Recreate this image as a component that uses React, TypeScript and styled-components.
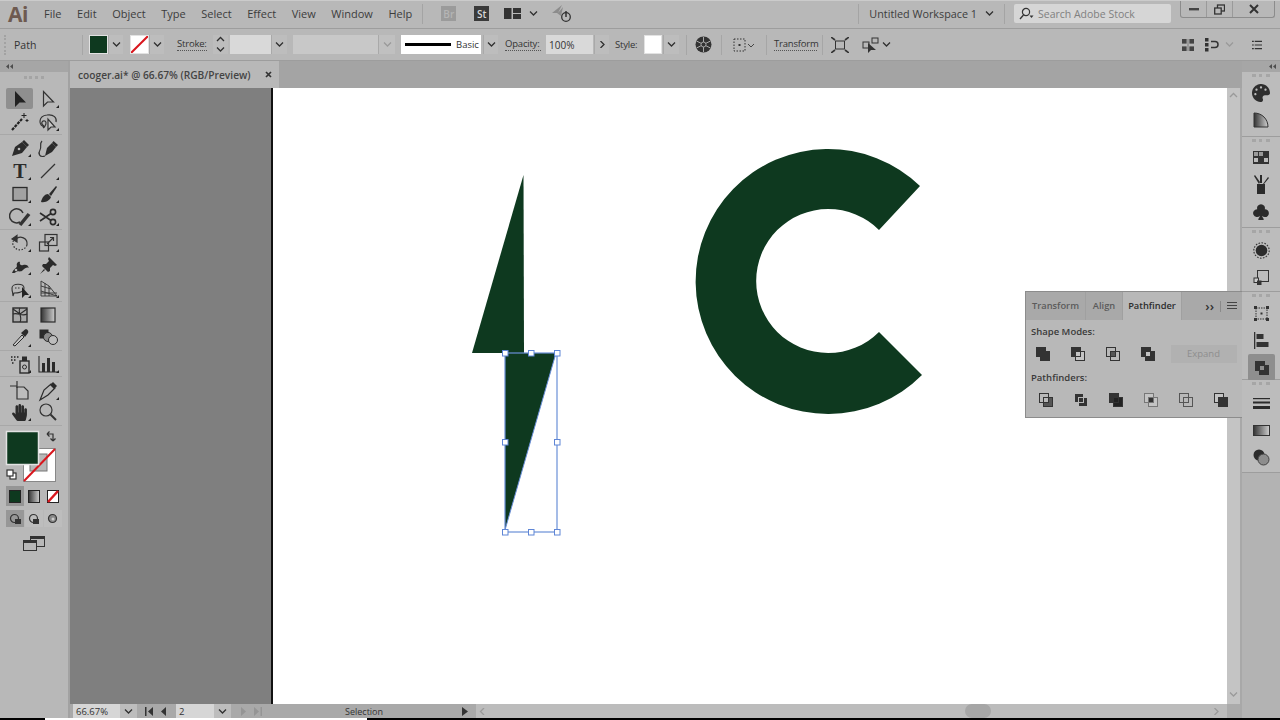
import { FC, ReactNode } from 'react';
import styled, { createGlobalStyle, css } from 'styled-components';
import { FaHandPaper, FaPalette } from 'react-icons/fa';
import { BsSuitClubFill } from 'react-icons/bs';

const GREEN = '#0e391f';
const INK = '#333333';

const GlobalStyle = createGlobalStyle`
  html, body {
    margin: 0;
    background: #b8b8b8;
    overflow: hidden;
  }
  * {
    box-sizing: border-box;
  }
`;

const offset = css<{ $ml?: number }>`
  margin-left: ${(p) => p.$ml ?? 0}px;
  flex-shrink: 0;
`;

/* ---------- small shared drawings ---------- */

const Chevron: FC<{ dim?: boolean; dir?: 'down' | 'up' | 'right' | 'left' }> = ({ dim, dir = 'down' }) => {
  const d = {
    down: 'M1 1.5 L4.5 5 L8 1.5',
    up: 'M1 5 L4.5 1.5 L8 5',
    right: 'M2.5 0 L6 3.5 L2.5 7',
    left: 'M6 0 L2.5 3.5 L6 7',
  }[dir];
  return (
    <svg width="9" height="7" viewBox="0 0 9 7">
      <path d={d} fill="none" stroke={dim ? '#9a9a9a' : '#303030'} strokeWidth="1.3" />
    </svg>
  );
};

const Collapse: FC = () => (
  <svg width="7" height="5" viewBox="0 0 7 5" fill="#4d4d4d">
    <path d="M3 0 L0 2.5 L3 5 Z M7 0 L4 2.5 L7 5 Z" />
  </svg>
);

const Pair: FC<{ back: string; front: string; mid: string; line?: string }> = ({ back, front, mid, line = '#333' }) => (
  <svg width="16" height="16" viewBox="0 0 16 16">
    <rect x="1.5" y="1.5" width="9" height="9" fill={back} stroke={line} />
    <rect x="5.5" y="5.5" width="9" height="9" fill={front} stroke={line} />
    <rect x="5.5" y="5.5" width="5" height="5" fill={mid} stroke={line} />
  </svg>
);

/* ---------- tool icons ---------- */

const toolIcons: Record<string, ReactNode> = {
  selection: <path d="M6 3 L6 19 L10.5 14.5 L17 14.5 Z" fill="#222" />,
  direct: <path d="M6.5 3.5 L6.5 18 L10.5 14 L16.5 14 Z" fill="none" stroke="#333" strokeWidth="1.2" />,
  wand: (
    <g stroke="#222" fill="none">
      <path d="M3 19 L13 8" strokeWidth="2.2" strokeDasharray="3 1" />
      <path d="M15 2 V7 M12.5 4.5 H17.5 M18 8 V11 M16.5 9.5 H19.5" strokeWidth="1" />
    </g>
  ),
  lasso: (
    <g fill="none" stroke="#333" strokeWidth="1.2">
      <path d="M8 16 C1 15 1 5 10 4 C17 3 20 7 19 11" />
      <path d="M7 15 C3 13 5 9 8 10 C10 11 9 15 6 17" />
      <path d="M11 8 L11 19 L14 16 L18 16 Z" fill="#c8c8c8" />
    </g>
  ),
  pen: (
    <g>
      <path d="M3 19 L6 10 L13 5 L18 10 L13 16 Z" fill="#2b2b2b" />
      <path d="M13 5 L15 3 L20 8 L18 10 Z" fill="#2b2b2b" />
      <circle cx="10" cy="12" r="1.3" fill="#b8b8b8" />
    </g>
  ),
  curvature: (
    <g>
      <path d="M8 19 L10 11 L15 6 L19 10 L15 15 Z" fill="#2b2b2b" />
      <path d="M15 6 L16.5 4 L21 8 L19 10 Z" fill="#2b2b2b" />
      <path d="M8 19 C2 21 1 16 3 13 C5 10 2 7 5 4" fill="none" stroke="#333" strokeWidth="1.2" />
    </g>
  ),
  type: (
    <text x="11" y="18" textAnchor="middle" fontFamily="'Liberation Serif', serif" fontWeight="700" fontSize="20" fill="#2b2b2b">
      T
    </text>
  ),
  line: <path d="M4 18 L18 4" stroke="#333" strokeWidth="1.2" />,
  rect: <rect x="4" y="4.5" width="14" height="13" fill="#a2a2a2" stroke="#2b2b2b" strokeWidth="1.3" />,
  brush: (
    <g fill="#2b2b2b">
      <path d="M12 11 L19 3 L20 4 L14 13 Z" />
      <path d="M4 19 C5 14 8 11 11 11 L14 14 C13 17 9 20 4 19 Z" />
    </g>
  ),
  shaper: (
    <g fill="none" stroke="#333">
      <path d="M11 16 A7 7 0 1 1 14 7" strokeWidth="1.5" />
      <path d="M11 19 L20 8" strokeWidth="3.5" />
    </g>
  ),
  scissors: (
    <g fill="none" stroke="#2b2b2b" strokeWidth="1.6">
      <circle cx="16" cy="6" r="2.6" />
      <circle cx="16" cy="16" r="2.6" />
      <path d="M14 7.5 L3 15 M14 14.5 L3 7" />
    </g>
  ),
  rotate: (
    <g fill="none" stroke="#333" strokeWidth="1.2">
      <path d="M7 7 C11 3 19 6 18 13" />
      <path d="M18 13 C16 19 7 20 4 13 C3.5 11 4 9 5 8" strokeDasharray="1.5 1.5" />
      <path d="M3 7 L8 3.5 L8 10 Z" fill="#333" />
    </g>
  ),
  scale: (
    <g fill="none" stroke="#333" strokeWidth="1.2">
      <rect x="8" y="2.5" width="12" height="11" />
      <rect x="2.5" y="10" width="9" height="9" />
      <path d="M10 12 L16 6 M13 5.5 H16.5 V9" />
    </g>
  ),
  warp: (
    <g fill="#2b2b2b">
      <path d="M3 18 C5 13 7 14 8 11 C7 9 9 6 11 7 C10 9 12 11 14 10 C17 9 19 10 20 13 C18 12 16 13 14 15 C11 18 9 15 7 17 C6 18 5 18 3 18 Z" />
      <circle cx="7" cy="15" r="1.3" fill="#b8b8b8" />
    </g>
  ),
  pin: (
    <g fill="#2b2b2b">
      <path d="M12 2 L20 10 L18 11 L16 10 L13 13 L13 16 L11 17 L5 11 L6 9 L9 9 L12 6 L11 4 Z" />
      <path d="M7 14 L3 19 L8 15 Z" />
    </g>
  ),
  free: (
    <g>
      <path d="M3 10 C3 5 15 5 15 10 C15 15 7 15 5 15 L4 18 L3.5 14 C3 13 3 12 3 10 Z" fill="none" stroke="#333" strokeWidth="1.1" />
      <path d="M6 10 H12" stroke="#333" strokeDasharray="1.5 1.5" />
      <path d="M13 9 L13 20 L16 17 L20 17 Z" fill="#222" />
    </g>
  ),
  perspective: (
    <g fill="none" stroke="#333" strokeWidth="0.9">
      <path d="M4 3 L4 18 L20 18 L12 8 Z" />
      <path d="M4 8 L14 11 M4 13 L20 18 M8 5 L8 18 M12 8 L12 18 M4 15 H20" />
    </g>
  ),
  mesh: (
    <g fill="none" stroke="#2b2b2b" strokeWidth="1.1">
      <rect x="4" y="4" width="14" height="14" fill="#a9a9a9" strokeWidth="1.4" />
      <path d="M11 4 C8 8 14 13 11 18 M4 10 C9 8 13 13 18 10 M4 5 L11 10 M18 5 L11 10" />
    </g>
  ),
  gradient: <rect x="4" y="4" width="14" height="14" fill="url(#toolFade)" stroke="#2b2b2b" strokeWidth="1.2" />,
  eyedropper: (
    <g>
      <path d="M4 18 L13 8 L15 10 L6 19 Z" fill="#c5c5c5" stroke="#2b2b2b" />
      <path d="M12 6 L16 2.5 C18 1.5 20 4 19 6 L16 10 Z" fill="#2b2b2b" />
    </g>
  ),
  blend: (
    <g stroke="#2b2b2b">
      <rect x="3" y="3" width="8" height="8" fill="#2b2b2b" />
      <circle cx="11" cy="10" r="4.5" fill="#8a8a8a" />
      <circle cx="16" cy="13" r="4.5" fill="#bcbcbc" />
    </g>
  ),
  sprayer: (
    <g>
      <path d="M2 4 H3.5 M5 4 H6.5 M8 4 H9.5 M2 7 H3.5 M5 7 H6.5 M3 10 H4.5" stroke="#222" strokeWidth="1.4" />
      <rect x="11" y="8" width="9" height="12" fill="none" stroke="#2b2b2b" strokeWidth="1.4" />
      <rect x="13" y="3.5" width="5" height="4.5" fill="#2b2b2b" />
      <circle cx="15.5" cy="14" r="2" fill="none" stroke="#2b2b2b" />
    </g>
  ),
  graph: (
    <g fill="#2b2b2b">
      <path d="M2 3 V19 H21" fill="none" stroke="#2b2b2b" strokeWidth="1.1" />
      <rect x="5" y="10" width="3" height="9" />
      <rect x="10" y="5" width="3" height="14" />
      <rect x="15" y="9" width="3" height="10" />
    </g>
  ),
  artboard: (
    <g fill="none" stroke="#333" strokeWidth="1.2">
      <path d="M8 7 H15 L19 11 V19 H8 Z" fill="#bdbdbd" />
      <path d="M1 6 H8 M8 1 V8" />
    </g>
  ),
  slice: (
    <g>
      <path d="M3 20 L7 10 L14 4 L18 8 L11 15 Z" fill="none" stroke="#2b2b2b" strokeWidth="1.2" />
      <path d="M13 5 L16 2 L20 6 L17 9 Z" fill="#2b2b2b" />
    </g>
  ),
  zoom: (
    <g fill="none" stroke="#333">
      <circle cx="9" cy="9" r="6" strokeWidth="1.2" />
      <path d="M13.5 13.5 L19 19" strokeWidth="2" />
    </g>
  ),
};

const toolSections: { top?: number; row?: number; bottom?: number; tools: [string, boolean][] }[] = [
  { tools: [['selection', false], ['direct', true], ['wand', false], ['lasso', true]] },
  {
    tools: [
      ['pen', true], ['curvature', false], ['type', true], ['line', true],
      ['rect', true], ['brush', true], ['shaper', true], ['scissors', true],
    ],
  },
  { tools: [['rotate', true], ['scale', true], ['warp', true], ['pin', true], ['free', true], ['perspective', true]] },
  { tools: [['mesh', false], ['gradient', false], ['eyedropper', true], ['blend', false]] },
  { tools: [['sprayer', true], ['graph', true]] },
  { top: 3, row: 21.5, bottom: 2, tools: [['artboard', false], ['slice', true], ['hand', true], ['zoom', false]] },
];

/* ---------- page ---------- */

const App: FC = () => {
  return (
    <>
      <GlobalStyle />
      <Screen>
        <MenuBar>
          <Logo>Ai</Logo>
          <MenuList>
            {['File', 'Edit', 'Object', 'Type', 'Select', 'Effect', 'View', 'Window', 'Help'].map((m) => (
              <MenuItem key={m}>{m}</MenuItem>
            ))}
          </MenuList>
          <MenuRule $ml={10} />
          <AppBadge $ml={18} $dim>Br</AppBadge>
          <AppBadge $ml={18}>St</AppBadge>
          <MenuIcon $ml={15}>
            <svg width="17" height="13" viewBox="0 0 17 13">
              <rect x="0" y="1" width="7.5" height="11" fill="#333" />
              <rect x="9" y="1" width="8" height="5" fill="#333" />
              <rect x="9" y="7" width="8" height="5" fill="#333" />
            </svg>
          </MenuIcon>
          <MenuIcon $ml={8}><Chevron /></MenuIcon>
          <MenuIcon $ml={14}>
            <svg width="21" height="20" viewBox="0 0 21 20">
              <path d="M0 9 L10 1 L6 9 L11 3 L9 12 L5 9 Z" fill="#8c8c8c" />
              <circle cx="14" cy="13" r="4.3" fill="none" stroke="#333" strokeWidth="1.3" />
              <path d="M14 7 V13" stroke="#333" strokeWidth="1.5" />
            </svg>
          </MenuIcon>
          <WorkspaceArea>
            <MenuRule />
            <WorkspaceName>Untitled Workspace 1</WorkspaceName>
            <Chevron />
            <MenuRule $ml={10} />
            <SearchBox>
              <svg width="15" height="13" viewBox="0 0 15 13">
                <circle cx="7" cy="5" r="3.6" fill="none" stroke="#333" strokeWidth="1.2" />
                <path d="M4.5 8 L1 12" stroke="#333" strokeWidth="1.4" />
                <path d="M10.5 8.5 H14.5 L12.5 11 Z" fill="#333" />
              </svg>
              <span>Search Adobe Stock</span>
            </SearchBox>
            <WindowControls>
              <WindowButton $w={26}>
                <svg width="10" height="3" viewBox="0 0 10 3"><rect width="10" height="2.4" fill="#444" /></svg>
              </WindowButton>
              <WindowButton $w={26}>
                <svg width="11" height="11" viewBox="0 0 11 11">
                  <rect x="3.5" y="1" width="7" height="6" fill="none" stroke="#333" strokeWidth="1.3" />
                  <rect x="0.7" y="4" width="6.5" height="6" fill="#b8b8b8" stroke="#333" strokeWidth="1.3" />
                </svg>
              </WindowButton>
              <WindowButton $w={41} $last>
                <svg width="10" height="10" viewBox="0 0 10 10">
                  <path d="M1 1 L9 9 M9 1 L1 9" stroke="#333" strokeWidth="2" />
                </svg>
              </WindowButton>
            </WindowControls>
          </WorkspaceArea>
        </MenuBar>

        <ControlBar>
          <BarGrip $ml={4} />
          <SelectionName $ml={7}>Path</SelectionName>
          <BarRule $ml={18} />
          <Swatch $ml={6} $color={GREEN} />
          <DropButton $w={15}><Chevron /></DropButton>
          <Swatch $ml={7} $color="#fff">
            <svg width="17" height="17" viewBox="0 0 17 17">
              <path d="M0 17 L17 0" stroke="#d9161d" strokeWidth="2" />
            </svg>
          </Swatch>
          <DropButton $w={15}><Chevron /></DropButton>
          <DottedLabel $ml={13} $w={30}>Stroke:</DottedLabel>
          <SpinButton $ml={6}>
            <Chevron dir="up" />
            <Chevron />
          </SpinButton>
          <ValueField $ml={2} $w={41} />
          <DropButton $w={16}><Chevron /></DropButton>
          <ValueField $ml={6} $w={85} $muted />
          <DropButton $w={17} $muted><Chevron dim /></DropButton>
          <StrokePreview $ml={6}>
            <StrokeLine />
            <span>Basic</span>
          </StrokePreview>
          <DropButton $ml={2} $w={15}><Chevron /></DropButton>
          <DottedLabel $ml={7} $w={36}>Opacity:</DottedLabel>
          <ValueField $ml={5} $w={47}>100%</ValueField>
          <DropButton $ml={1} $w={15}><Chevron dir="right" /></DropButton>
          <PlainLabel $ml={6}>Style:</PlainLabel>
          <Swatch $ml={5} $color="#fff" $w={18} />
          <DropButton $ml={1} $w={16}><Chevron /></DropButton>
          <BarRule $ml={7} />
          <BarIcon $ml={8}>
            <svg width="17" height="17" viewBox="0 0 17 17">
              <circle cx="8.5" cy="8.5" r="8" fill="#333" />
              <path d="M8.5 1 V16 M1.5 5 L15.5 12 M1.5 12 L15.5 5" stroke="#aaa" strokeWidth="1" />
              <circle cx="8.5" cy="8.5" r="2.5" fill="#333" stroke="#aaa" />
            </svg>
          </BarIcon>
          <BarRule $ml={9} />
          <BarIcon $ml={11}>
            <svg width="22" height="14" viewBox="0 0 22 14">
              <rect x="1" y="1" width="11" height="12" fill="none" stroke="#333" strokeDasharray="1.5 1.5" />
              <rect x="5.5" y="6" width="2" height="2" fill="#333" />
              <path d="M15 6 L18 9 L21 6" fill="none" stroke="#444" />
            </svg>
          </BarIcon>
          <BarRule $ml={11} />
          <DottedLabel $ml={7} $w={43}>Transform</DottedLabel>
          <BarRule $ml={5} />
          <BarIcon $ml={8}>
            <svg width="18" height="16" viewBox="0 0 18 16">
              <rect x="4.5" y="4" width="9" height="8" fill="none" stroke="#333" />
              <path d="M0 0 L4 3 M18 0 L14 3 M0 16 L4 13 M18 16 L14 13" stroke="#333" strokeWidth="1.6" />
            </svg>
          </BarIcon>
          <BarIcon $ml={13}>
            <svg width="18" height="16" viewBox="0 0 18 16">
              <rect x="1" y="5" width="6" height="6" fill="none" stroke="#333" />
              <rect x="10" y="1" width="6" height="5" fill="none" stroke="#333" />
              <path d="M6 6 L6 16 L9 13 L14 13 Z" fill="#333" />
            </svg>
          </BarIcon>
          <BarIcon $ml={2}><Chevron /></BarIcon>
          <BarEnd>
            <BarIcon>
              <svg width="12" height="12" viewBox="0 0 13 13" fill="#444">
                <rect width="5" height="5" />
                <rect x="8" width="5" height="5" />
                <rect y="8" width="5" height="5" />
                <rect x="8" y="8" width="5" height="5" />
                <rect x="5.8" width="1.4" height="13" fill="#888" />
              </svg>
            </BarIcon>
            <BarIcon $ml={11}>
              <svg width="15" height="15" viewBox="0 0 15 15">
                <path d="M0 1 H3.5 V4.5 H0 Z M0 6 H3.5 V9.5 H0 Z M0 11 H3.5 V14.5 H0 Z" fill="#333" />
                <path d="M6 4.5 H10 C14 4.5 14 10.5 10 10.5 H6" fill="none" stroke="#333" strokeWidth="1.5" />
              </svg>
            </BarIcon>
            <BarIcon $ml={5}><Chevron dim /></BarIcon>
            <BarIcon $ml={18}>
              <svg width="10" height="10" viewBox="0 0 11 10">
                <path d="M0 1 H2 M3 1 H11 M0 5 H2 M3 5 H11 M0 9 H2 M3 9 H11" stroke="#333" strokeWidth="1.2" />
              </svg>
            </BarIcon>
          </BarEnd>
        </ControlBar>

        <Workspace>
          <ToolDock>
            <DockHead><Collapse /></DockHead>
            <DockGrip />
            {toolSections.map((s, i) => (
              <ToolSection key={i} $top={s.top} $bottom={s.bottom} $row={s.row}>
                {s.tools.map(([name, more]) => (
                  <ToolCell key={name} $active={name === 'selection'} $more={more}>
                    {name === 'hand' ? (
                      <FaHandPaper size={17} color="#2b2b2b" />
                    ) : (
                      <svg width="22" height="22" viewBox="0 0 22 22">{toolIcons[name]}</svg>
                    )}
                  </ToolCell>
                ))}
              </ToolSection>
            ))}
            <FillStroke>
              <svg width="68" height="60" viewBox="0 0 68 60">
                <rect x="23.5" y="22.5" width="32" height="33" fill="#fff" stroke="#888" />
                <rect x="30" y="28" width="17" height="17" fill="#b8b8b8" stroke="#777" />
                <path d="M24 55 L55 23" stroke="#d9161d" strokeWidth="2" />
                <rect x="6.5" y="5.5" width="32" height="33" fill={GREEN} stroke="#e2e2e2" strokeWidth="1.5" />
                <path d="M47 8 H53 V15 M47 8 L49.5 5.5 M47 8 L49.5 10.5 M53 15 L50.5 12.5 M53 15 L55.5 12.5" fill="none" stroke="#333" strokeWidth="1.2" />
                <rect x="10" y="47" width="6" height="6" fill="#fff" stroke="#333" strokeWidth="1.2" />
                <rect x="7" y="44" width="6" height="6" fill="#fff" stroke="#333" strokeWidth="1.2" />
              </svg>
            </FillStroke>
            <ModeRow>
              <ModeCell $active>
                <svg width="12" height="13" viewBox="0 0 12 13"><rect x="0.5" y="0.5" width="11" height="12" fill={GREEN} stroke="#222" /></svg>
              </ModeCell>
              <ModeCell>
                <svg width="12" height="13" viewBox="0 0 12 13"><rect x="0.5" y="0.5" width="11" height="12" fill="url(#toolFade)" stroke="#222" /></svg>
              </ModeCell>
              <ModeCell>
                <svg width="12" height="13" viewBox="0 0 12 13">
                  <rect x="0.5" y="0.5" width="11" height="12" fill="#fff" stroke="#222" />
                  <path d="M1 12 L11 1" stroke="#d9161d" strokeWidth="2.5" />
                </svg>
              </ModeCell>
            </ModeRow>
            <DrawRow>
              {[true, false, false].map((on, i) => (
                <DrawCell key={i} $active={on}>
                  <svg width="12" height="12" viewBox="0 0 12 12">
                    {i < 2 && <rect x={i === 0 ? 6 : 5} y="6" width="6" height="5" fill="#333" />}
                    <circle cx="5.5" cy="5.5" r="4" fill={i === 2 ? '#888' : 'none'} stroke="#333" strokeWidth="1.2" />
                    {i === 2 && <circle cx="6" cy="6" r="1.5" fill="#ccc" />}
                  </svg>
                </DrawCell>
              ))}
            </DrawRow>
            <ScreenMode>
              <svg width="22" height="15" viewBox="0 0 22 15">
                <rect x="7.5" y="0.5" width="14" height="10" fill="#b8b8b8" stroke="#333" />
                <rect x="7.5" y="0.5" width="14" height="2.5" fill="#333" />
                <rect x="0.5" y="4.5" width="13" height="10" fill="#b8b8b8" stroke="#333" />
                <rect x="0.5" y="4.5" width="13" height="2.5" fill="#333" />
              </svg>
            </ScreenMode>
          </ToolDock>

          <Center>
            <TabRow>
              <DocTab>
                <DocTitle>cooger.ai* @ 66.67% (RGB/Preview)</DocTitle>
                <svg width="7" height="7" viewBox="0 0 7 7">
                  <path d="M1 1 L6 6 M6 1 L1 6" stroke="#333" strokeWidth="1.7" />
                </svg>
              </DocTab>
            </TabRow>
            <CanvasRow>
              <Pasteboard />
              <Artboard>
                <ArtSvg viewBox="273 88 954 616">
                  <path d="M523.5 175 L524 353 L472 353 Z" fill={GREEN} />
                  <path d="M505 353 L556 353 L505 530 Z" fill={GREEN} />
                  <path d="M920 186 A132.5 132.5 0 1 0 922 375 L879 332 A72 72 0 1 1 879 230 Z" fill={GREEN} />
                  <rect x="505" y="353" width="52" height="179" fill="none" stroke="#6a8fd8" strokeWidth="1.2" />
                  <path d="M556 353 L505 530" fill="none" stroke="#6a8fd8" strokeWidth="1" />
                  {[
                    [505, 353], [531, 353], [557, 353], [505, 442],
                    [557, 442], [505, 532], [531, 532], [557, 532],
                  ].map(([x, y]) => (
                    <rect key={`${x}-${y}`} x={x - 2.5} y={y - 2.5} width="5.5" height="5.5" fill="#fff" stroke="#5f86d6" />
                  ))}
                </ArtSvg>
              </Artboard>
              <VScroll>
                <Chevron dir="up" dim />
                <Chevron dim />
              </VScroll>
            </CanvasRow>
            <StatusBar>
              <ZoomField>66.67%</ZoomField>
              <StatusDrop><Chevron /></StatusDrop>
              <PageNav $ml={8}>
                <svg width="24" height="9" viewBox="0 0 24 9" fill="#333">
                  <rect x="0" y="0" width="1.5" height="9" />
                  <path d="M8 0 L3 4.5 L8 9 Z M21 0 L16 4.5 L21 9 Z" />
                </svg>
              </PageNav>
              <PageField $ml={7}>2</PageField>
              <StatusDrop><Chevron /></StatusDrop>
              <PageNav $ml={7}>
                <svg width="24" height="9" viewBox="0 0 24 9" fill="#959595">
                  <path d="M3 0 L8 4.5 L3 9 Z M16 0 L21 4.5 L16 9 Z" />
                  <rect x="22.5" y="0" width="1.5" height="9" />
                </svg>
              </PageNav>
              <StatusText>Selection</StatusText>
              <PageNav $ml={77}>
                <svg width="6" height="9" viewBox="0 0 6 9" fill="#333"><path d="M0 0 L6 4.5 L0 9 Z" /></svg>
              </PageNav>
              <HScroll>
                <Chevron dir="left" dim />
                <HThumb />
                <Chevron dir="right" dim />
              </HScroll>
              <ScrollCorner />
            </StatusBar>
          </Center>

          <PanelDock>
            <DockHead $right><Collapse /></DockHead>
            <DockGroup $h={65} $pt={7}>
              <DockCell><FaPalette size={18} color="#2e2e2e" /></DockCell>
              <DockCell>
                <svg width="16" height="16" viewBox="0 0 16 16">
                  <path d="M1 1 C9 1 15 7 15 15 H1 Z" fill="url(#toolFade)" stroke="#333" />
                </svg>
              </DockCell>
            </DockGroup>
            <DockGroup $h={91} $pt={7}>
              <DockCell>
                <svg width="16" height="13" viewBox="0 0 16 13">
                  <rect width="16" height="13" fill="#333" />
                  <path d="M1 5 H5 V1 H1 Z M6 5 H10 V1 H6 Z" fill="#9a9a9a" />
                  <path d="M1 11 H5 V7 H1 Z M11 11 H15 V7 H11 Z" fill="#bbb" />
                </svg>
              </DockCell>
              <DockCell>
                <svg width="16" height="19" viewBox="0 0 16 19" fill="#2b2b2b">
                  <rect x="4" y="9" width="8" height="10" />
                  <path d="M6 9 L1 1 L2 0 L7 7 Z M10 9 L15 2 L16 3 L11 9 Z M7 8 L7 0 L9 0 L9 8 Z" />
                </svg>
              </DockCell>
              <DockCell><BsSuitClubFill size={18} color="#2b2b2b" /></DockCell>
            </DockGroup>
            <DockGroup $h={64} $pt={8.5}>
              <DockCell>
                <svg width="17" height="17" viewBox="0 0 17 17">
                  <circle cx="8.5" cy="8.5" r="5.8" fill="#2b2b2b" />
                  <circle cx="8.5" cy="8.5" r="7.7" fill="none" stroke="#333" strokeWidth="1.1" strokeDasharray="1.6 1.4" />
                </svg>
              </DockCell>
              <DockCell>
                <svg width="17" height="17" viewBox="0 0 17 17">
                  <rect x="4.5" y="1.5" width="11" height="11" fill="none" stroke="#333" />
                  <rect x="1" y="9" width="4.5" height="4.5" fill="#ccc" stroke="#333" />
                  <rect x="4" y="11.5" width="4.5" height="4.5" fill="#333" />
                </svg>
              </DockCell>
            </DockGroup>
            <DockGroup $h={88} $pt={8}>
              <DockCell>
                <svg width="15" height="15" viewBox="0 0 15 15">
                  <rect x="2" y="2" width="11" height="11" fill="none" stroke="#333" strokeDasharray="1.5 1" />
                  <path d="M0 0 H3 V3 H0 Z M12 0 H15 V3 H12 Z M0 12 H3 V15 H0 Z M12 12 H15 V15 H12 Z M6.5 6.5 H8.5 V8.5 H6.5 Z" fill="#333" />
                </svg>
              </DockCell>
              <DockCell>
                <svg width="15" height="17" viewBox="0 0 15 17" fill="#333">
                  <rect x="0" y="0" width="1.3" height="17" />
                  <rect x="2.5" y="2" width="7" height="5" />
                  <rect x="2.5" y="10" width="12" height="5" />
                </svg>
              </DockCell>
              <DockCell $active>
                <Pair back="#333" front="#333" mid="#8e8e8e" />
              </DockCell>
            </DockGroup>
            <DockGroup $h={93} $pt={10}>
              <DockCell>
                <svg width="17" height="11" viewBox="0 0 17 11" fill="#2b2b2b">
                  <rect width="17" height="1.2" />
                  <rect y="3.5" width="17" height="2" />
                  <rect y="8" width="17" height="3" />
                </svg>
              </DockCell>
              <DockCell>
                <svg width="17" height="11" viewBox="0 0 17 11">
                  <rect x="0.5" y="0.5" width="16" height="10" fill="url(#toolFade)" stroke="#333" />
                </svg>
              </DockCell>
              <DockCell>
                <svg width="17" height="17" viewBox="0 0 17 17">
                  <circle cx="6" cy="6" r="5.5" fill="#2b2b2b" />
                  <circle cx="10.5" cy="10.5" r="5.5" fill="#8d8d8d" stroke="#444" />
                </svg>
              </DockCell>
            </DockGroup>
          </PanelDock>

          <FloatPanel>
            <PanelTabs>
              <PanelTab $w={60}>Transform</PanelTab>
              <PanelTab $w={37}>Align</PanelTab>
              <PanelTab $w={59} $active>Pathfinder</PanelTab>
              <PanelTabEnd>
                <span>››</span>
                <PanelTabRule />
                <svg width="10" height="8" viewBox="0 0 10 8">
                  <path d="M0 .5 H10 M0 3.5 H10 M0 6.5 H10" stroke="#444" />
                </svg>
              </PanelTabEnd>
            </PanelTabs>
            <PanelBody>
              <PanelHeading>Shape Modes:</PanelHeading>
              <ShapeRow>
                <ShapeButton><Pair back="#333" front="#333" mid="#333" /></ShapeButton>
                <ShapeButton><Pair back="#333" front="#c4c4c4" mid="#c4c4c4" /></ShapeButton>
                <ShapeButton><Pair back="#b8b8b8" front="#b8b8b8" mid="#555" /></ShapeButton>
                <ShapeButton><Pair back="#333" front="#333" mid="#c4c4c4" /></ShapeButton>
                <ExpandButton>Expand</ExpandButton>
              </ShapeRow>
              <PanelHeading $tight>Pathfinders:</PanelHeading>
              <FinderRow>
                <ShapeButton><Pair back="#b8b8b8" front="#555" mid="#b8b8b8" /></ShapeButton>
                <ShapeButton><Pair back="#333" front="#333" mid="#333" line="#b8b8b8" /></ShapeButton>
                <ShapeButton><Pair back="#333" front="#222" mid="#222" /></ShapeButton>
                <ShapeButton><Pair back="#c4c4c4" front="#c4c4c4" mid="#333" line="#777" /></ShapeButton>
                <ShapeButton><Pair back="#b8b8b8" front="#b8b8b8" mid="#b8b8b8" line="#555" /></ShapeButton>
                <ShapeButton><Pair back="#c4c4c4" front="#333" mid="#333" /></ShapeButton>
              </FinderRow>
            </PanelBody>
          </FloatPanel>
        </Workspace>

        <BottomEdge>
          <EdgePart $w={45} $color="#000" />
          <EdgePart $w={322} $color="#fff" />
          <EdgePart $color="#000" />
        </BottomEdge>

        <HiddenDefs width="0" height="0">
          <defs>
            <linearGradient id="toolFade" x1="0" x2="1" y1="0" y2="0">
              <stop offset="0" stopColor="#333" />
              <stop offset="1" stopColor="#cfcfcf" />
            </linearGradient>
          </defs>
        </HiddenDefs>
      </Screen>
    </>
  );
};

const Screen = styled.div`
  display: flex;
  flex-direction: column;
  position: relative;
  width: 1280px;
  height: 720px;
  overflow: hidden;
  background: #b8b8b8;
  color: ${INK};
  font-family: 'Open Sans', 'Liberation Sans', sans-serif;
`;
const HiddenDefs = styled.svg`
  position: absolute;
`;

/* menu bar */
const MenuBar = styled.div`
  display: flex;
  align-items: center;
  height: 29px;
  flex-shrink: 0;
  padding-bottom: 2px;
  border-top: 1px solid #cbcbcb;
  border-bottom: 1px solid #9d9d9d;
`;
const Logo = styled.div`
  width: 44px;
  padding-left: 8px;
  font-size: 21px;
  font-weight: 700;
  color: #6e5a50;
  letter-spacing: -0.5px;
`;
const MenuList = styled.div`
  display: flex;
  gap: 15.6px;
`;
const MenuItem = styled.span`
  font-size: 11px;
  color: #3c3c3c;
`;
const MenuRule = styled.div<{ $ml?: number }>`
  ${offset}
  width: 1px;
  height: 20px;
  background: #a4a4a4;
`;
const AppBadge = styled.div<{ $ml?: number; $dim?: boolean }>`
  ${offset}
  display: flex;
  align-items: center;
  justify-content: center;
  width: 15px;
  height: 15px;
  font-size: 10px;
  font-weight: 600;
  color: ${(p) => (p.$dim ? '#b5b5b5' : '#d8d8d8')};
  background: ${(p) => (p.$dim ? '#9b9b9b' : '#3a3a3a')};
`;
const MenuIcon = styled.div<{ $ml?: number }>`
  ${offset}
  display: flex;
  align-items: center;
`;
const WorkspaceArea = styled.div`
  display: flex;
  align-items: center;
  margin-left: auto;
  align-self: stretch;
`;
const WorkspaceName = styled.span`
  margin: 0 8px 0 10px;
  font-size: 10.8px;
  color: #3c3c3c;
`;
const SearchBox = styled.div`
  display: flex;
  align-items: center;
  gap: 4px;
  width: 157px;
  height: 19px;
  margin-left: 9px;
  padding-left: 5px;
  background: #d6d6d6;
  border-radius: 2px;
  font-size: 10.5px;
  color: #808080;
`;
const WindowControls = styled.div`
  display: flex;
  align-self: flex-start;
  height: 17px;
  margin: 0 5px 0 9px;
  border: 1px solid #8c8c8c;
  border-top: none;
  border-radius: 0 0 3px 3px;
`;
const WindowButton = styled.div<{ $w: number; $last?: boolean }>`
  display: flex;
  align-items: center;
  justify-content: center;
  width: ${(p) => p.$w}px;
  border-right: ${(p) => (p.$last ? 'none' : '1px solid #9a9a9a')};
`;

/* control bar */
const ControlBar = styled.div`
  display: flex;
  align-items: center;
  height: 32px;
  flex-shrink: 0;
  border-bottom: 1px solid #9d9d9d;
  font-size: 10px;
`;
const BarGrip = styled.div<{ $ml?: number }>`
  ${offset}
  width: 3px;
  height: 20px;
  border-left: 2px dotted #a2a2a2;
`;
const SelectionName = styled.div<{ $ml?: number }>`
  ${offset}
  width: 50px;
  font-size: 10.5px;
`;
const BarRule = styled.div<{ $ml?: number }>`
  ${offset}
  width: 1px;
  height: 20px;
  background: #a6a6a6;
`;
const Swatch = styled.div<{ $ml?: number; $color: string; $w?: number }>`
  ${offset}
  display: flex;
  width: ${(p) => p.$w ?? 19}px;
  height: 19px;
  background: ${(p) => p.$color};
  border: 1px solid #e2e2e2;
`;
const DropButton = styled.div<{ $ml?: number; $w: number; $muted?: boolean }>`
  ${offset}
  display: flex;
  align-items: center;
  justify-content: center;
  width: ${(p) => p.$w}px;
  height: 19px;
  background: ${(p) => (p.$muted ? '#c0c0c0' : '#bdbdbd')};
  border-left: 1px solid #a9a9a9;
`;
const SpinButton = styled.div<{ $ml?: number }>`
  ${offset}
  display: flex;
  flex-direction: column;
  align-items: center;
  justify-content: center;
  gap: 3px;
  width: 15px;
  height: 19px;
  background: #bdbdbd;
`;
const ValueField = styled.div<{ $ml?: number; $w: number; $muted?: boolean }>`
  ${offset}
  display: flex;
  align-items: center;
  width: ${(p) => p.$w}px;
  height: 19px;
  padding-left: 3px;
  background: ${(p) => (p.$muted ? '#c8c8c8' : '#d9d9d9')};
  font-size: 10px;
`;
const DottedLabel = styled.span<{ $ml?: number; $w: number }>`
  ${offset}
  width: ${(p) => p.$w}px;
  border-bottom: 1px dotted #555;
  font-size: 9.5px;
  letter-spacing: -0.2px;
  line-height: 12px;
  white-space: nowrap;
`;
const PlainLabel = styled.span<{ $ml?: number }>`
  ${offset}
  width: 24px;
  font-size: 9.5px;
  letter-spacing: -0.2px;
`;
const StrokePreview = styled.div<{ $ml?: number }>`
  ${offset}
  display: flex;
  align-items: center;
  gap: 5px;
  width: 80px;
  height: 19px;
  padding-left: 4px;
  background: #fff;
  font-size: 9.5px;
`;
const StrokeLine = styled.div`
  width: 46px;
  height: 2.5px;
  background: #000;
`;
const BarIcon = styled.div<{ $ml?: number }>`
  ${offset}
  display: flex;
  align-items: center;
`;
const BarEnd = styled.div`
  display: flex;
  align-items: center;
  margin-left: auto;
  padding-right: 18px;
`;

/* work area */
const Workspace = styled.div`
  display: flex;
  position: relative;
  flex: 1;
  min-height: 0;
`;
const ToolDock = styled.div`
  display: flex;
  flex-direction: column;
  width: 70px;
  flex-shrink: 0;
  border-right: 2px solid #a2a2a2;
`;
const DockHead = styled.div<{ $right?: boolean }>`
  display: flex;
  align-items: center;
  justify-content: ${(p) => (p.$right ? 'flex-end' : 'flex-start')};
  height: 11px;
  flex-shrink: 0;
  padding: 0 ${(p) => (p.$right ? 4 : 0)}px 0 ${(p) => (p.$right ? 0 : 6)}px;
  background: #a6a6a6;
`;
const DockGrip = styled.div`
  display: flex;
  justify-content: center;
  height: 14px;
  flex-shrink: 0;
  &::before {
    content: '';
    width: 20px;
    height: 3px;
    margin-top: 4px;
    border-top: 3px dotted #a4a4a4;
  }
`;
const ToolSection = styled.div<{ $top?: number; $bottom?: number; $row?: number }>`
  display: grid;
  grid-template-columns: 28px 28px;
  grid-auto-rows: ${(p) => p.$row ?? 23}px;
  padding: ${(p) => p.$top ?? 1}px 0 ${(p) => p.$bottom ?? 1}px 6px;
  box-sizing: content-box;
  width: 56px;
  flex-shrink: 0;
  border-bottom: 1px solid #a8a8a8;
`;
const ToolCell = styled.div<{ $active?: boolean; $more?: boolean }>`
  display: flex;
  align-items: center;
  justify-content: center;
  position: relative;
  margin: 1px 1px 1px 0;
  border-radius: 2px;
  background: ${(p) => (p.$active ? '#8f8f8f' : 'transparent')};
  ${(p) =>
    p.$more &&
    css`
      &::after {
        content: '';
        position: absolute;
        right: 2px;
        bottom: 1px;
        border-left: 3px solid transparent;
        border-bottom: 3px solid #222;
      }
    `}
`;
const FillStroke = styled.div`
  display: flex;
  height: 60px;
  flex-shrink: 0;
`;
const ModeRow = styled.div`
  display: grid;
  grid-template-columns: 18px 19px 19px;
  height: 20px;
  flex-shrink: 0;
  margin-left: 6px;
`;
const ModeCell = styled.div<{ $active?: boolean }>`
  display: flex;
  align-items: center;
  justify-content: center;
  background: ${(p) => (p.$active ? '#959595' : 'transparent')};
`;
const DrawRow = styled.div`
  display: grid;
  grid-template-columns: 18px 18px 18px;
  gap: 1px;
  height: 17px;
  flex-shrink: 0;
  margin: 4px 0 0 6px;
`;
const DrawCell = styled.div<{ $active?: boolean }>`
  display: flex;
  align-items: center;
  justify-content: center;
  background: ${(p) => (p.$active ? '#979797' : '#bdbdbd')};
`;
const ScreenMode = styled.div`
  display: flex;
  justify-content: center;
  margin-top: 9px;
`;

const Center = styled.div`
  display: flex;
  flex-direction: column;
  flex: 1;
  min-width: 0;
`;
const TabRow = styled.div`
  display: flex;
  height: 27px;
  flex-shrink: 0;
  background: #a4a4a4;
`;
const DocTab = styled.div`
  display: flex;
  align-items: center;
  justify-content: space-between;
  width: 209px;
  padding: 0 7px 0 8px;
  background: #b8b8b8;
`;
const DocTitle = styled.span`
  font-size: 10.2px;
  font-weight: 600;
  color: #444;
`;
const CanvasRow = styled.div`
  display: flex;
  flex: 1;
  min-height: 0;
`;
const Pasteboard = styled.div`
  width: 201px;
  flex-shrink: 0;
  background: #7f7f7f;
`;
const Artboard = styled.div`
  position: relative;
  flex: 1;
  background: #fff;
  border-left: 2px solid #111;
`;
const ArtSvg = styled.svg`
  position: absolute;
  inset: 0;
  width: 100%;
  height: 100%;
`;
const VScroll = styled.div`
  display: flex;
  flex-direction: column;
  align-items: center;
  justify-content: space-between;
  width: 15px;
  flex-shrink: 0;
  padding: 4px 0 6px;
  background: #c4c4c4;
  border-right: 2px solid #a8a8a8;
`;
const StatusBar = styled.div`
  display: flex;
  align-items: stretch;
  height: 14px;
  flex-shrink: 0;
  padding-left: 3px;
  background: #a9a9a9;
  font-size: 9.5px;
`;
const ZoomField = styled.div`
  width: 47px;
  padding-left: 3px;
  line-height: 15px;
  background: #d6d6d6;
`;
const PageField = styled.div<{ $ml?: number }>`
  ${offset}
  width: 38px;
  padding-left: 3px;
  line-height: 15px;
  background: #d6d6d6;
`;
const StatusDrop = styled.div`
  display: flex;
  align-items: center;
  justify-content: center;
  width: 17px;
  background: #bdbdbd;
`;
const PageNav = styled.div<{ $ml?: number }>`
  ${offset}
  display: flex;
  align-items: center;
`;
const StatusText = styled.span`
  width: 40px;
  margin-left: 83px;
  font-size: 9px;
  line-height: 16px;
  color: #333;
`;
const HScroll = styled.div`
  display: flex;
  flex: 1;
  align-items: center;
  justify-content: space-between;
  position: relative;
  margin-left: 8px;
  padding: 0 6px 0 2px;
  background: #bcbcbc;
`;
const HThumb = styled.div`
  position: absolute;
  left: 489px;
  top: 0;
  bottom: 0;
  width: 26px;
  background: #a6a6a6;
  border-radius: 7px;
`;
const ScrollCorner = styled.div`
  width: 15px;
  flex-shrink: 0;
  background: #ababab;
  border-right: 2px solid #a8a8a8;
`;

const PanelDock = styled.div`
  display: flex;
  flex-direction: column;
  width: 38px;
  flex-shrink: 0;
  background: #b3b3b3;
`;
const DockGroup = styled.div<{ $h: number; $pt: number }>`
  display: grid;
  grid-auto-rows: 27px;
  position: relative;
  height: ${(p) => p.$h}px;
  flex-shrink: 0;
  padding-top: ${(p) => p.$pt}px;
  background: #bcbcbc;
  border-bottom: 1px solid #9d9d9d;
  &::before {
    content: '';
    position: absolute;
    top: 2px;
    left: 10px;
    width: 18px;
    border-top: 3px dotted #a6a6a6;
  }
`;
const DockCell = styled.div<{ $active?: boolean }>`
  display: flex;
  align-items: center;
  justify-content: center;
  margin: ${(p) => (p.$active ? '0 5px 0 6px' : '0')};
  background: ${(p) => (p.$active ? '#8e8e8e' : 'transparent')};
  border-radius: 2px;
`;

/* floating Pathfinder panel */
const FloatPanel = styled.div`
  position: absolute;
  left: 1025px;
  top: 230px;
  width: 217px;
  height: 127px;
  background: #b8b8b8;
  border: 1px solid #8c8c8c;
  border-right: none;
`;
const PanelTabs = styled.div`
  display: flex;
  height: 28px;
  background: #a9a9a9;
  font-size: 9.3px;
  font-weight: 600;
  line-height: 28px;
`;
const PanelTab = styled.div<{ $w: number; $active?: boolean }>`
  width: ${(p) => p.$w}px;
  text-align: center;
  color: ${(p) => (p.$active ? '#2d2d2d' : '#5b5b5b')};
  background: ${(p) => (p.$active ? '#b8b8b8' : 'transparent')};
  border-right: 1px solid #a0a0a0;
`;
const PanelTabEnd = styled.div`
  display: flex;
  align-items: center;
  justify-content: flex-end;
  flex: 1;
  gap: 6px;
  padding-right: 5px;
  font-size: 13px;
`;
const PanelTabRule = styled.div`
  width: 1px;
  height: 11px;
  background: #8a8a8a;
`;
const PanelBody = styled.div`
  padding: 5px 5px 0;
`;
const PanelHeading = styled.div<{ $tight?: boolean }>`
  font-size: 9.5px;
  font-weight: 600;
  line-height: 13px;
  margin-top: ${(p) => (p.$tight ? 8 : 0)}px;
  color: #3a3a3a;
`;
const ShapeRow = styled.div`
  display: grid;
  grid-template-columns: repeat(4, 35px) 66px;
  align-items: center;
  height: 19px;
  margin-top: 6px;
  justify-items: center;
  margin-left: -6px;
`;
const FinderRow = styled.div`
  display: grid;
  grid-template-columns: repeat(6, 35px);
  align-items: center;
  justify-items: center;
  height: 19px;
  margin-top: 6px;
  margin-left: -3px;
`;
const ShapeButton = styled.div`
  display: flex;
`;
const ExpandButton = styled.div`
  width: 66px;
  height: 18px;
  margin-left: 11px;
  background: #b1b1b1;
  color: #8e8e8e;
  font-size: 9.5px;
  line-height: 18px;
  text-align: center;
`;

const BottomEdge = styled.div`
  display: flex;
  height: 2px;
  flex-shrink: 0;
`;
const EdgePart = styled.div<{ $w?: number; $color: string }>`
  width: ${(p) => (p.$w ? `${p.$w}px` : 'auto')};
  flex: ${(p) => (p.$w ? '0 0 auto' : 1)};
  background: ${(p) => p.$color};
`;

export default App;
